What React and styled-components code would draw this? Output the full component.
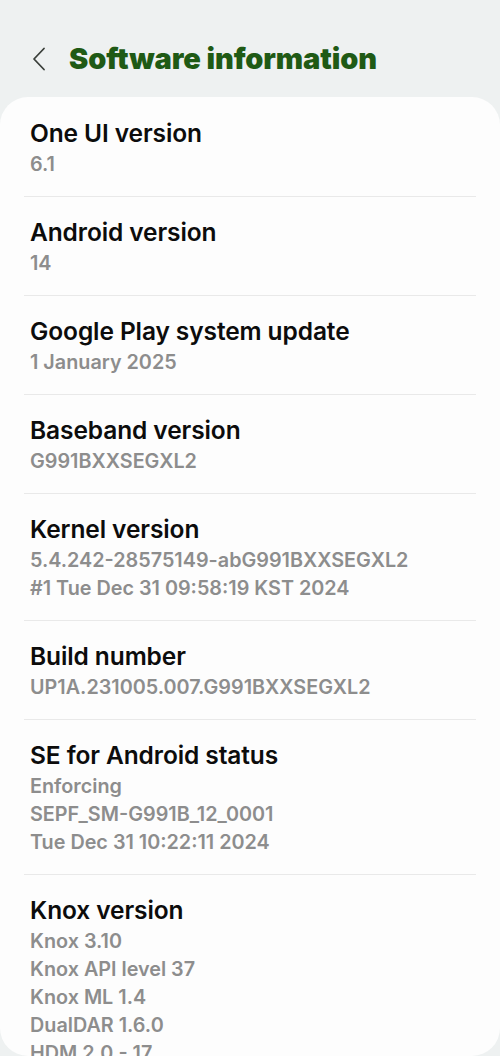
import React from 'react';
import styled, { createGlobalStyle } from 'styled-components';

const GlobalStyle = createGlobalStyle`
  html, body {
    margin: 0;
    padding: 0;
    background: #eef1f1;
  }
  body {
    font-family: Inter, "Noto Sans", "Liberation Sans", sans-serif;
    -webkit-font-smoothing: antialiased;
  }
`;

const Screen = styled.div`
  width: 500px;
  height: 1056px;
  display: flex;
  flex-direction: column;
  background: #eef1f1;
  overflow: hidden;
`;

const Header = styled.header`
  height: 97px;
  flex-shrink: 0;
  display: flex;
  align-items: center;
  padding: 20px 0 0 28px;
  box-sizing: border-box;
  gap: 19px;
`;

const BackButton = styled.button`
  width: 22px;
  height: 28px;
  padding: 0;
  border: none;
  background: none;
  display: flex;
  align-items: center;
  justify-content: center;
  color: #3a3f3a;
  cursor: pointer;
`;

const Title = styled.h1`
  margin: 0;
  font-size: 29px;
  font-weight: 900;
  letter-spacing: -0.1px;
  color: #1f5a15;
`;

const Card = styled.main`
  flex: 1;
  background: #fdfdfd;
  border-radius: 28px;
  overflow: hidden;
  padding: 0 24px;
`;

const Row = styled.section`
  padding: ${({ $first }) => ($first ? '20px' : '19px')} 6px 18px;
  border-top: ${({ $first }) => ($first ? 'none' : '1px solid #e9e9e9')};
`;

const Label = styled.div`
  font-size: 24.5px;
  line-height: 33px;
  font-weight: 600;
  letter-spacing: -0.1px;
  color: #0c0c0c;
`;

const Value = styled.div`
  font-size: 19.8px;
  line-height: 28px;
  font-weight: 600;
  color: #8d8d8d;
`;

const items = [
  { label: 'One UI version', values: ['6.1'] },
  { label: 'Android version', values: ['14'] },
  { label: 'Google Play system update', values: ['1 January 2025'] },
  { label: 'Baseband version', values: ['G991BXXSEGXL2'] },
  {
    label: 'Kernel version',
    values: ['5.4.242-28575149-abG991BXXSEGXL2', '#1 Tue Dec 31 09:58:19 KST 2024'],
  },
  { label: 'Build number', values: ['UP1A.231005.007.G991BXXSEGXL2'] },
  {
    label: 'SE for Android status',
    values: ['Enforcing', 'SEPF_SM-G991B_12_0001', 'Tue Dec 31 10:22:11 2024'],
  },
  {
    label: 'Knox version',
    values: ['Knox 3.10', 'Knox API level 37', 'Knox ML 1.4', 'DualDAR 1.6.0', 'HDM 2.0 - 17'],
  },
];

const ChevronLeft = () => (
  <svg width="14" height="24" viewBox="0 0 14 24" fill="none">
    <path d="M12 1.5 L2 12 L12 22.5" stroke="currentColor" strokeWidth="1.8" strokeLinecap="round" strokeLinejoin="round" />
  </svg>
);

export default function App() {
  return (
    <>
      <GlobalStyle />
      <Screen>
        <Header>
          <BackButton aria-label="Back">
            <ChevronLeft />
          </BackButton>
          <Title>Software information</Title>
        </Header>
        <Card>
          {items.map((item, i) => (
            <Row key={item.label} $first={i === 0}>
              <Label>{item.label}</Label>
              {item.values.map((v) => (
                <Value key={v}>{v}</Value>
              ))}
            </Row>
          ))}
        </Card>
      </Screen>
    </>
  );
}
